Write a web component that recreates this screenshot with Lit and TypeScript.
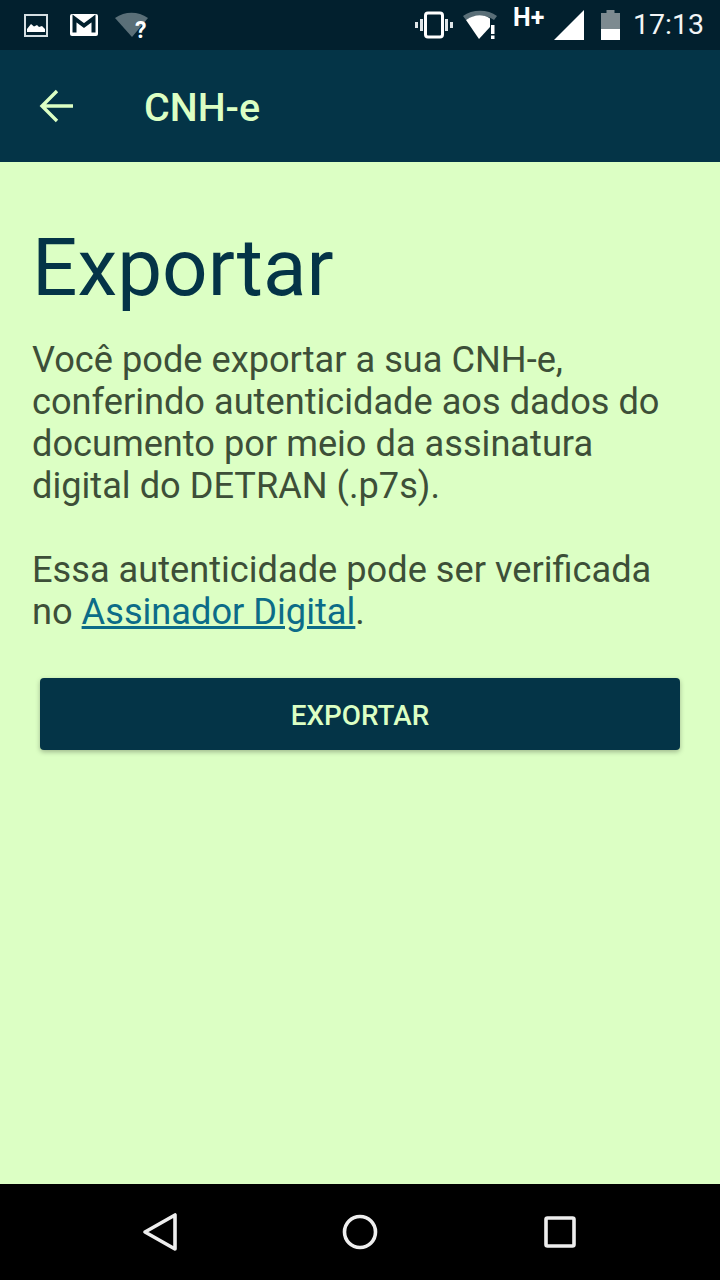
import { LitElement, html, css } from 'lit';
import { customElement } from 'lit/decorators.js';

@customElement('app-root')
export class AppRoot extends LitElement {
  static styles = css`
    :host {
      display: flex;
      flex-direction: column;
      height: 1280px;
      background: #dcffc4;
      font-family: Roboto, 'Liberation Sans', sans-serif;
    }

    svg { display: block; flex: none; }

    .status {
      height: 50px;
      flex: none;
      display: flex;
      align-items: center;
      background: #02202e;
      color: #fff;
    }
    .status .left {
      display: flex;
      align-items: center;
      gap: 22px;
      padding-left: 24px;
    }
    .status .right {
      display: flex;
      align-items: center;
      margin-left: auto;
      padding-right: 16px;
    }
    .time {
      font-size: 28.5px;
      line-height: 50px;
      margin-left: 13px;
      color: #f2f5f6;
    }
    .hplus {
      font-size: 25px;
      font-weight: 700;
      line-height: 25px;
      align-self: flex-start;
      margin: 5px 0 0 15px;
      width: 36px;
    }

    .bar {
      height: 112px;
      flex: none;
      display: flex;
      align-items: center;
      background: #043447;
      color: #dcffc4;
      padding-left: 38px;
    }
    .bar .title {
      font-size: 39.4px;
      font-weight: 500;
      margin: 2px 0 0 70px;
    }

    .content {
      flex: 1;
      padding: 0 32px;
    }
    h1 {
      margin: 61px 0 0;
      font-size: 80px;
      line-height: 90px;
      font-weight: 400;
      color: #043447;
    }
    p {
      margin: 26px 0 0;
      font-size: 36.2px;
      line-height: 42px;
      color: #3d4f38;
    }
    p + p { margin-top: 42px; }
    a {
      color: #0c6c88;
      text-decoration: underline;
    }
    .btn {
      display: block;
      width: 640px;
      height: 72px;
      margin: 45px 0 0 8px;
      padding: 2px 0 0;
      border: 0;
      border-radius: 4px;
      background: #043447;
      color: #dcffc4;
      font: 500 27.8px Roboto, 'Liberation Sans', sans-serif;
      box-shadow: 0 2px 5px rgba(0, 0, 0, 0.28);
    }

    .nav {
      height: 96px;
      flex: none;
      display: flex;
      align-items: center;
      justify-content: space-between;
      padding: 0 144px 0 142px;
      background: #000;
    }
    .nav .home { margin-right: 2px; }
  `;

  render() {
    return html`
      <div class="status">
        <div class="left">
          <svg width="24" height="24" viewBox="0 0 24 24">
            <rect x="1" y="2" width="22" height="21" fill="none" stroke="#d5dfe3" stroke-width="2" />
            <path d="M3 19v-3l4-5 3 2.5 3-1.5 2 2 3-1 3 3v3z" fill="#fff" />
          </svg>
          <svg width="28" height="24" viewBox="0 0 28 24">
            <rect x="0" y="1" width="28" height="22" rx="2" fill="#fff" />
            <path d="M4.5 19.5V5.5L14 12.5l9.5-7v14" fill="none" stroke="#02202e" stroke-width="4" />
          </svg>
          <svg width="36" height="44" viewBox="0 0 36 44" style="margin-left:-5px">
            <path d="M0 15C10 8 23 8 33 15L17 34z" fill="#5a6f78" />
            <text x="20" y="34.5" font-size="23" font-weight="700" fill="#fff" font-family="Roboto, sans-serif">?</text>
          </svg>
        </div>
        <div class="right">
          <svg width="38" height="28" viewBox="0 0 38 28">
            <rect x="10.5" y="2" width="17" height="24" rx="2.5" fill="none" stroke="#fff" stroke-width="3" />
            <path d="M5 8h3v12H5zM30 8h3v12h-3zM0 11h3v6H0zM35 11h3v6h-3z" fill="#dfe5e8" />
          </svg>
          <svg width="35" height="30" viewBox="0 0 35 30" style="margin-left:10px">
            <path d="M0 6C9-1 25-1 34 6l-3 4C22 4 12 4 3 10z" fill="#5a6f78" />
            <path d="M3 10C12 4 20 4 27 8.5V17L16 29z" fill="#fff" />
            <path d="M28 15h3.5v9H28zM28 25.5h3.5V29H28z" fill="#fff" />
          </svg>
          <span class="hplus">H+</span>
          <svg width="30" height="30" viewBox="0 0 30 30" style="margin-left:5px">
            <path d="M30 0v30H0z" fill="#fff" />
          </svg>
          <svg width="19" height="30" viewBox="0 0 19 30" style="margin-left:17px">
            <path d="M5.5 0h8v3H19v17H0V3h5.5z" fill="#7d8a90" />
            <rect y="19" width="19" height="11" fill="#fff" />
          </svg>
          <span class="time">17:13</span>
        </div>
      </div>

      <div class="bar">
        <svg width="36" height="36" viewBox="0 0 36 36">
          <path d="M35 18H5M19 3L4 18l15 15" fill="none" stroke="#dcffc4" stroke-width="3.4" />
        </svg>
        <span class="title">CNH-e</span>
      </div>

      <div class="content">
        <h1>Exportar</h1>
        <p>Você pode exportar a sua CNH-e, conferindo autenticidade aos dados do documento por meio da assinatura digital do DETRAN (.p7s).</p>
        <p>Essa autenticidade pode ser verificada no <a href="#">Assinador Digital</a>.</p>
        <button class="btn">EXPORTAR</button>
      </div>

      <div class="nav">
        <svg width="36" height="40" viewBox="0 0 36 40">
          <path d="M33 3v34L3 20z" fill="none" stroke="#eee" stroke-width="3.6" stroke-linejoin="round" />
        </svg>
        <svg class="home" width="36" height="36" viewBox="0 0 36 36">
          <circle cx="18" cy="18" r="15.5" fill="none" stroke="#eee" stroke-width="3.6" />
        </svg>
        <svg width="32" height="32" viewBox="0 0 32 32">
          <rect x="2" y="2" width="28" height="28" rx="1.5" fill="none" stroke="#eee" stroke-width="3.6" />
        </svg>
      </div>
    `;
  }
}
